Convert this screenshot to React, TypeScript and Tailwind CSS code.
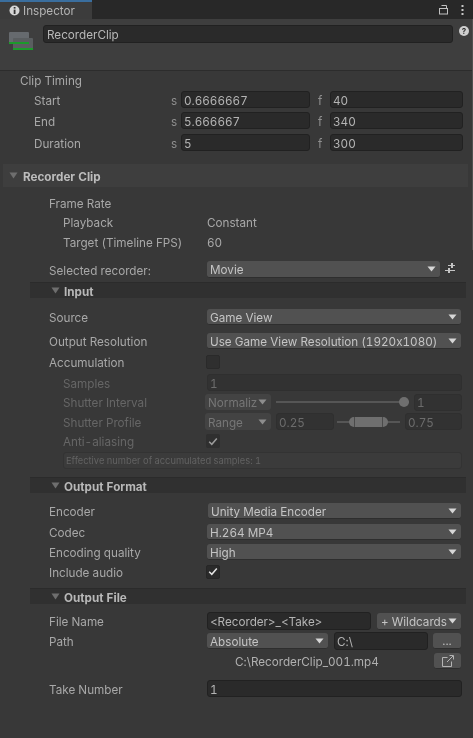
import React from "react";

const Caret = ({ dim = false }: { dim?: boolean }) => (
  <svg width="9" height="6" viewBox="0 0 9 6" className={dim ? "shrink-0 opacity-50" : "shrink-0"}>
    <path d="M0.5 0.5H8.5L4.5 5.5Z" fill="#d6d6d6" />
  </svg>
);

const Fold = () => (
  <svg width="9" height="7" viewBox="0 0 9 7" className="shrink-0">
    <path d="M0.5 0.5H8.5L4.5 6.5Z" fill="#6e6e6e" />
  </svg>
);

const Check = ({ dim = false }: { dim?: boolean }) => (
  <svg width="10" height="9" viewBox="0 0 10 9" className={dim ? "opacity-60" : ""}>
    <path d="M1.2 4.8L3.8 7.3L8.8 1.5" fill="none" stroke="#e4e4e4" strokeWidth="1.5" />
  </svg>
);

function Row({ label, indent, className, children }: { label?: string; indent: string; className: string; children?: React.ReactNode }) {
  return (
    <div className={`flex items-center ${className}`}>
      <div className={`w-[207px] shrink-0 whitespace-nowrap pt-[2px] ${indent}`}>{label}</div>
      {children}
    </div>
  );
}

function Input({ value, className }: { value: string; className: string }) {
  return (
    <div className={`flex items-center whitespace-nowrap rounded-[3px] border border-[#212121] bg-[#2a2a2a] px-[2px] pt-[2px] text-[#b4b4b4] ${className}`}>
      {value}
    </div>
  );
}

function DimInput({ value, className }: { value: string; className: string }) {
  return (
    <div className={`flex items-center rounded-[3px] border border-[#2f2f2f] bg-[#323232] px-[2px] pt-[2px] text-[#6c6c6c] ${className}`}>
      {value}
    </div>
  );
}

function Select({ value, className }: { value: string; className: string }) {
  return (
    <div className={`flex items-center justify-between rounded-[3px] border-b border-[#2e2e2e] bg-[#515151] pl-[3px] pr-[4px] text-[#c4c4c4] ${className}`}>
      <span className="whitespace-nowrap pt-[2px]">{value}</span>
      <Caret />
    </div>
  );
}

function DimSelect({ value, className }: { value: string; className: string }) {
  return (
    <div className={`flex items-center justify-between overflow-hidden rounded-[3px] bg-[#434343] pl-[3px] pr-[4px] text-[#767676] ${className}`}>
      <span className="whitespace-nowrap pt-[2px]">{value}</span>
      <Caret dim />
    </div>
  );
}

function SubHeader({ title, className }: { title: string; className: string }) {
  return (
    <div className={`ml-[30px] mr-[7px] flex h-[16px] items-center gap-[4px] border-t border-[#2b2b2b] bg-[#303030] pl-[21px] font-bold text-[#b8b8b8] ${className}`}>
      <Fold />
      <span className="pt-[2px]">{title}</span>
    </div>
  );
}

function TimingRow({ label, s, f, className }: { label: string; s: string; f: string; className: string }) {
  return (
    <div className={`flex h-[17px] items-center ${className}`}>
      <div className="w-[171px] shrink-0 pl-[34px] pt-[2px]">{label}</div>
      <div className="w-[10px] shrink-0 pt-[2px] text-[#8f8f8f]">s</div>
      <Input value={s} className="h-[17px] w-[129px]" />
      <div className="ml-[8px] w-[12px] shrink-0 pt-[2px] text-[#8f8f8f]">f</div>
      <Input value={f} className="h-[17px] w-[133px]" />
    </div>
  );
}

const Dots = () => (
  <svg width="3" height="10" viewBox="0 0 3 10">
    <rect x="0.5" y="0" width="2" height="2" fill="#c8c8c8" />
    <rect x="0.5" y="4" width="2" height="2" fill="#c8c8c8" />
    <rect x="0.5" y="8" width="2" height="2" fill="#c8c8c8" />
  </svg>
);

const Lock = () => (
  <svg width="9" height="10" viewBox="0 0 9 10" fill="none" stroke="#c0c0c0">
    <path d="M2.5 0.5H7.5V3.5" />
    <rect x="0.5" y="3.5" width="8" height="5.5" />
  </svg>
);

const ClipIcon = () => (
  <svg width="25" height="19" viewBox="0 0 25 19" className="ml-[9px] mt-[13px] shrink-0">
    <rect x="0" y="0" width="20" height="11" rx="1" fill="#666a6e" />
    <rect x="4" y="6" width="20" height="11" rx="1" fill="#5a5e60" />
    <rect x="0" y="10" width="20" height="2" fill="#1c9a2b" />
    <rect x="4" y="16" width="20" height="2" fill="#1c9a2b" />
  </svg>
);

const Sliders = () => (
  <svg width="10" height="10" viewBox="0 0 10 10" className="mb-[3px] ml-[5px]" fill="#c4c4c4">
    <rect x="3" y="2" width="7" height="1" />
    <rect x="6" y="0" width="2" height="5" />
    <rect x="0" y="7" width="10" height="1" />
    <rect x="3" y="5" width="2" height="5" />
  </svg>
);

const External = () => (
  <svg width="12" height="12" viewBox="0 0 12 12" fill="none" stroke="#b4b4b4">
    <path d="M9.5 6.5V11.5H0.5V2.5H5.5" />
    <path d="M5 7L11 1M7.5 0.5H11.5V4.5" />
  </svg>
);

export default function App() {
  return (
    <div className="relative h-[738px] w-[473px] overflow-hidden bg-[#383838] text-[11.7px] leading-[14px] text-[#a8a8a8] tabular-nums blur-[0.35px] [font-family:Inter,'Noto_Sans',sans-serif] [font-feature-settings:'calt'_0]">
      {/* Tab bar */}
      <div className="flex h-[19px] items-stretch justify-between bg-[#282828]">
        <div className="flex w-[92px] items-center gap-[3px] border-t-2 border-[#3a6e9e] bg-[#3c3c3c] pl-[9px] text-[#b4b4b4]">
          <svg width="11" height="11" viewBox="0 0 11 11">
            <circle cx="5.5" cy="5.5" r="5" fill="#d6d6d6" />
            <rect x="4.7" y="2" width="1.8" height="1.6" fill="#333" />
            <rect x="4.7" y="4.6" width="1.8" height="4.4" fill="#333" />
          </svg>
          <span>Inspector</span>
        </div>
        <div className="flex items-center gap-[13px] pr-[9px]">
          <Lock />
          <Dots />
        </div>
      </div>

      {/* Object header */}
      <div className="flex h-[52px] items-start border-b border-[#2c2c2c] bg-[#3e3e3e]">
        <ClipIcon />
        <div className="ml-[9px] mt-[6px] flex h-[18px] w-[410px] items-center rounded-[3px] border border-[#212121] bg-[#2a2a2a] px-[3px] pt-[2px] text-[#b8b8b8]">
          RecorderClip
        </div>
        <svg width="10" height="10" viewBox="0 0 10 10" className="ml-[6px] mt-[7px]">
          <circle cx="5" cy="5" r="5" fill="#cfcfcf" />
          <text x="5" y="8" fontSize="8" fontWeight="700" textAnchor="middle" fill="#333">?</text>
        </svg>
      </div>

      {/* Clip timing */}
      <div className="mt-[1px] flex h-[16px] items-center pl-[20px] pt-[2px]">Clip Timing</div>
      <TimingRow label="Start" s="0.6666667" f="40" className="mt-[3px]" />
      <TimingRow label="End" s="5.666667" f="340" className="mt-[4px]" />
      <TimingRow label="Duration" s="5" f="300" className="mt-[5px]" />

      {/* Recorder Clip */}
      <div className="ml-[3px] mr-[5px] mt-[13px] flex h-[23px] items-center gap-[5px] bg-[#3e3e3e] pl-[6px] font-bold text-[#bcbcbc]">
        <Fold />
        <span className="pt-[2px]">Recorder Clip</span>
      </div>

      <Row label="Frame Rate" indent="pl-[49px]" className="mt-[8px] h-[16px]" />
      <Row label="Playback" indent="pl-[63px]" className="mt-[3px] h-[16px]">
        <span className="pt-[2px]">Constant</span>
      </Row>
      <Row label="Target (Timeline FPS)" indent="pl-[63px]" className="mt-[4px] h-[16px]">
        <span className="pt-[2px]">60</span>
      </Row>
      <Row label="Selected recorder:" indent="pl-[49px]" className="mt-[11px] h-[17px]">
        <Select value="Movie" className="h-[17px] w-[233px]" />
        <Sliders />
      </Row>

      <SubHeader title="Input" className="mt-[4px]" />
      <Row label="Source" indent="pl-[49px]" className="mt-[11px] h-[16px]">
        <Select value="Game View" className="h-[16px] w-[254px]" />
      </Row>
      <Row label="Output Resolution" indent="pl-[49px]" className="mt-[8px] h-[16px]">
        <Select value="Use Game View Resolution (1920x1080)" className="h-[16px] w-[254px]" />
      </Row>
      <Row label="Accumulation" indent="pl-[49px]" className="mt-[6px] h-[13px]">
        <div className="-ml-px h-[14px] w-[14px] rounded-[2px] border border-[#2a2a2a] bg-[#2f2f2f]" />
      </Row>

      <div className="text-[#666666]">
        <Row label="Samples" indent="pl-[63px]" className="mt-[6px] h-[17px]">
          <DimInput value="1" className="h-[17px] w-[255px]" />
        </Row>
        <Row label="Shutter Interval" indent="pl-[63px]" className="mt-[3px] h-[16px]">
          <DimSelect value="Normaliz" className="-ml-[2px] h-[16px] w-[66px]" />
          <div className="relative ml-[5px] h-[2px] w-[133px] bg-[#565656]">
            <div className="absolute right-0 top-[-4px] h-[10px] w-[10px] rounded-full bg-[#6f6f6f]" />
          </div>
          <DimInput value="1" className="ml-[5px] h-[17px] w-[48px]" />
        </Row>
        <Row label="Shutter Profile" indent="pl-[63px]" className="mt-[3px] h-[17px]">
          <DimSelect value="Range" className="-ml-[2px] h-[17px] w-[66px]" />
          <DimInput value="0.25" className="ml-[5px] h-[17px] w-[58px]" />
          <div className="relative ml-[3px] h-[2px] w-[63px] bg-[#565656]">
            <div className="absolute left-[12px] top-[-4px] flex h-[10px] w-[39px] justify-between rounded-[5px] bg-[#6f6f6f] px-[5px]">
              <div className="h-[10px] w-px bg-[#4a4a4a]" />
              <div className="h-[10px] w-px bg-[#4a4a4a]" />
            </div>
          </div>
          <DimInput value="0.75" className="ml-[5px] h-[17px] w-[57px]" />
        </Row>
        <Row label="Anti-aliasing" indent="pl-[63px]" className="mt-[4px] h-[14px]">
          <div className="-ml-px flex h-[14px] w-[14px] items-center justify-center rounded-[2px] bg-[#2f2f2f]">
            <Check dim />
          </div>
        </Row>
        <div className="ml-[63px] mt-[4px] flex h-[17px] w-[399px] items-center rounded-[3px] border border-[#333333] bg-[#3b3b3b] pl-[2px] pt-[1px] text-[9.3px] text-[#626262]">
          Effective number of accumulated samples: 1
        </div>
      </div>

      <SubHeader title="Output Format" className="mt-[8px]" />
      <Row label="Encoder" indent="pl-[49px]" className="mt-[10px] h-[16px]">
        <Select value="Unity Media Encoder" className="ml-[1px] h-[16px] w-[253px]" />
      </Row>
      <Row label="Codec" indent="pl-[49px]" className="mt-[5px] h-[16px]">
        <Select value="H.264 MP4" className="h-[16px] w-[254px]" />
      </Row>
      <Row label="Encoding quality" indent="pl-[49px]" className="mt-[4px] h-[16px]">
        <Select value="High" className="h-[16px] w-[254px]" />
      </Row>
      <Row label="Include audio" indent="pl-[49px]" className="mt-[5px] h-[13px]">
        <div className="-ml-px flex h-[14px] w-[14px] items-center justify-center rounded-[2px] border border-[#262626] bg-[#2a2a2a]">
          <Check />
        </div>
      </Row>

      <SubHeader title="Output File" className="mt-[10px]" />
      <Row label="File Name" indent="pl-[49px]" className="mt-[8px] h-[18px]">
        <Input value="<Recorder>_<Take>" className="h-[18px] w-[164px]" />
        <div className="ml-[6px] flex h-[17px] w-[84px] items-center justify-between whitespace-nowrap rounded-[3px] border-b border-[#2e2e2e] bg-[#515151] pl-[4px] pr-[4px] text-[#c4c4c4]">
          <span className="pt-[2px]">+ Wildcards</span>
          <Caret />
        </div>
      </Row>
      <Row label="Path" indent="pl-[49px]" className="mt-[2px] h-[18px]">
        <Select value="Absolute" className="h-[16px] w-[121px]" />
        <Input value="C:\" className="ml-[6px] h-[18px] w-[94px]" />
        <div className="ml-[5px] flex h-[16px] w-[28px] items-center justify-center rounded-[3px] border-b border-[#2e2e2e] bg-[#515151] text-[#c4c4c4]">...</div>
      </Row>
      <Row indent="" className="mt-[3px] h-[16px]">
        <span className="ml-[28px] w-[199px] whitespace-nowrap pt-[2px] text-[#b0b0b0]">C:\RecorderClip_001.mp4</span>
        <div className="flex h-[16px] w-[27px] items-center justify-center rounded-[3px] border-b border-[#2e2e2e] bg-[#515151]">
          <External />
        </div>
      </Row>
      <Row label="Take Number" indent="pl-[49px]" className="mt-[11px] h-[17px]">
        <Input value="1" className="h-[17px] w-[255px]" />
      </Row>

      {/* Scrollbar sliver */}
      <div className="absolute right-0 top-[19px] h-[231px] w-px bg-[#505050]" />
    </div>
  );
}
